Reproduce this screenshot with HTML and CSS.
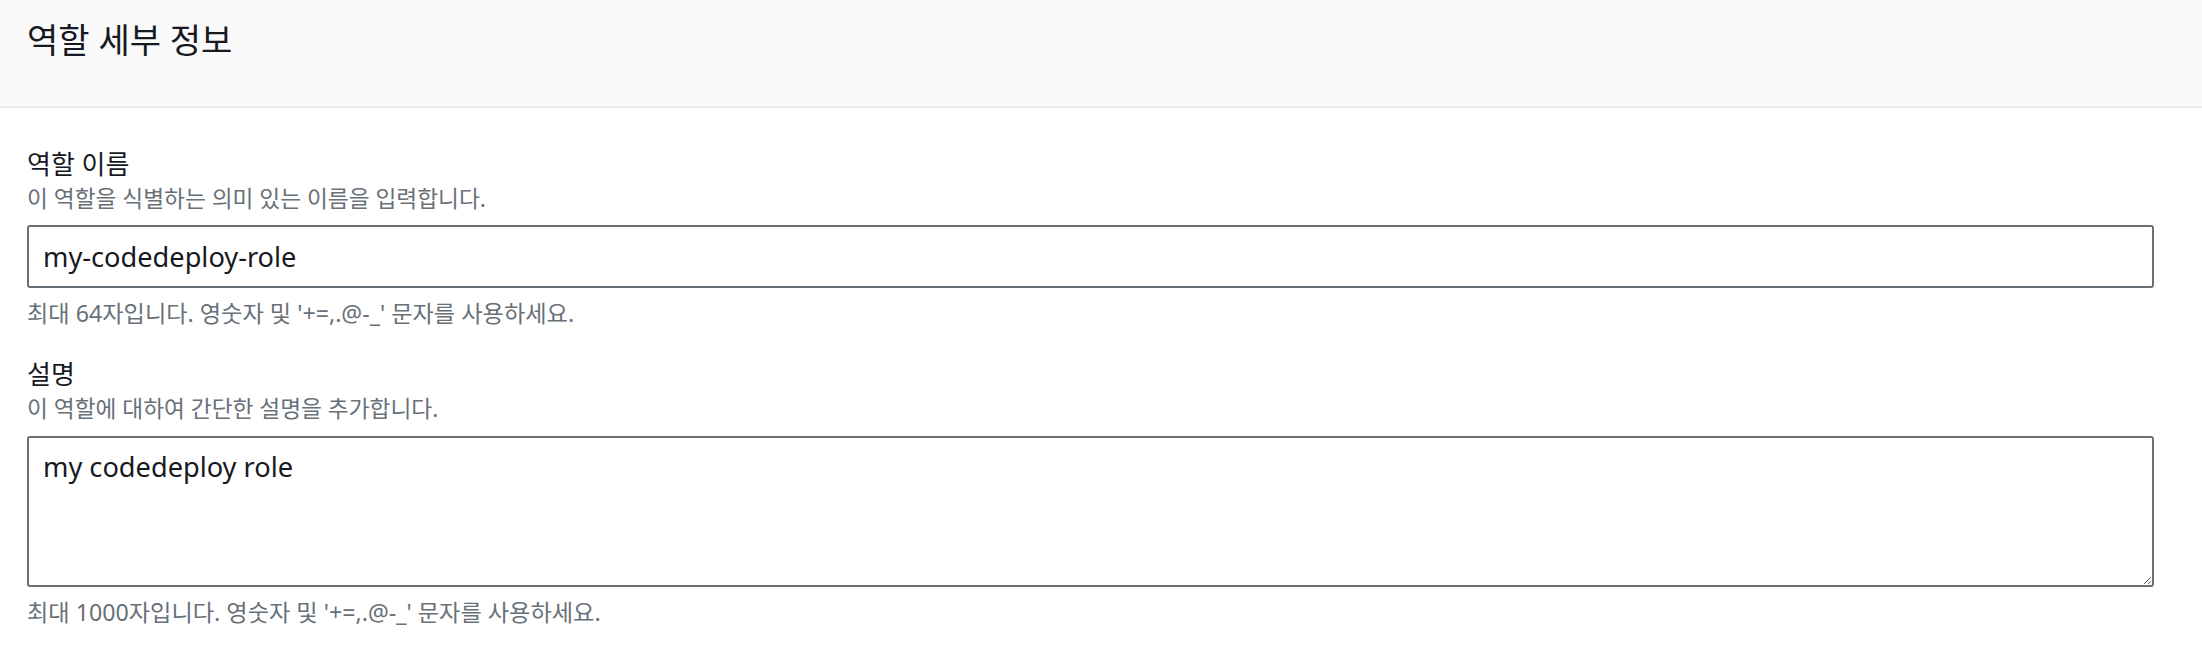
FILE: index.html
```html
<!DOCTYPE html>
<html lang="ko">
<head>
<meta charset="utf-8">
<title>역할 세부 정보</title>
<link rel="stylesheet" href="styles.css">
</head>
<body>
<div class="panel">
  <div class="panel-header">
    <h2 class="panel-title">역할 세부 정보</h2>
  </div>
  <div class="panel-body">
    <div class="field">
      <label class="field-label" for="role-name">역할 이름</label>
      <div class="field-desc">이 역할을 식별하는 의미 있는 이름을 입력합니다.</div>
      <input class="text-input" id="role-name" type="text" value="my-codedeploy-role">
      <div class="field-hint">최대 64자입니다. 영숫자 및 '+=,.@-_' 문자를 사용하세요.</div>
    </div>
    <div class="field">
      <label class="field-label" for="role-desc">설명</label>
      <div class="field-desc">이 역할에 대하여 간단한 설명을 추가합니다.</div>
      <textarea class="text-area" id="role-desc">my codedeploy role</textarea>
      <div class="field-hint">최대 1000자입니다. 영숫자 및 '+=,.@-_' 문자를 사용하세요.</div>
    </div>
  </div>
</div>
</body>
</html>
```
FILE: styles.css
```css
html, body {
  margin: 0;
  padding: 0;
  background: #ffffff;
}

body {
  font-family: "Noto Sans", "Noto Sans CJK KR", sans-serif;
  color: #16191f;
}

.panel-header {
  background: #fafafa;
  border-bottom: 2px solid #eaeded;
  height: 108px;
  box-sizing: border-box;
  padding: 21px 48px 0 27px;
}

.panel-title {
  margin: 0;
  font-size: 34px;
  line-height: 38px;
  font-weight: 400;
  color: #16191f;
}

.panel-body {
  padding: 40px 48px 0 27px;
}

.field + .field {
  margin-top: 30px;
}

.field-label {
  display: block;
  font-size: 26px;
  line-height: 32px;
  color: #16191f;
}

.field-desc {
  margin-top: 4px;
  font-size: 22.7px;
  line-height: 30px;
  color: #687078;
}

.text-input,
.text-area {
  display: block;
  width: 100%;
  box-sizing: border-box;
  border: 2px solid #687078;
  border-radius: 3px;
  background: #ffffff;
  padding: 0 14px;
  font-family: "Noto Sans", "Noto Sans CJK KR", sans-serif;
  font-size: 27.2px;
  color: #16191f;
  outline: none;
}

.text-input {
  margin: 11px 0 0;
  height: 63px;
  line-height: 32px;
}

.text-area {
  margin: 12px 0 0;
  height: 151px;
  line-height: 32px;
  padding-top: 13px;
}

.field-hint {
  margin-top: 10px;
  font-size: 23.2px;
  line-height: 30px;
  color: #687078;
}
```
